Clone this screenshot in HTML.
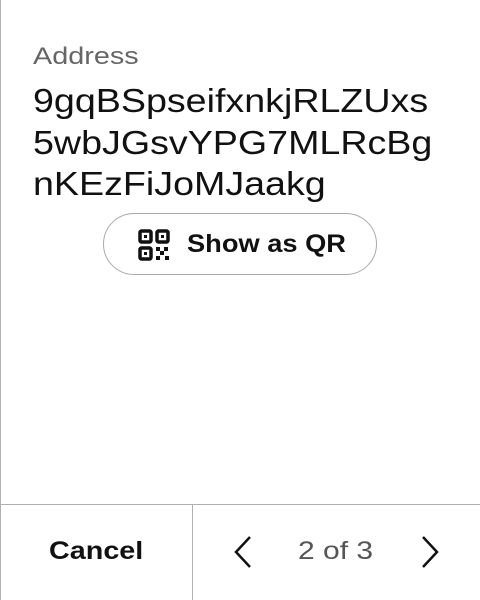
<!DOCTYPE html>
<html><head><style>
*{margin:0;padding:0;box-sizing:border-box}
body{width:480px;height:600px;background:#fff;font-family:"Liberation Sans",sans-serif;position:relative;overflow:hidden}
.s{transform-origin:0 0;white-space:nowrap}
.lb{position:absolute;left:0;top:0;width:1px;height:600px;background:#b0b0b0}
.lbl{position:absolute;left:33px;top:43px;font-size:24px;color:#666;transform:scaleX(1.2)}
.addr{position:absolute;left:33px;top:80px;font-size:33px;line-height:41.5px;color:#111;transform:scaleX(1.14)}
.btn{position:absolute;left:103px;top:213px;width:274px;height:62px;border:1.5px solid #aaa;border-radius:31px}
.btn span{position:absolute;left:83px;top:16px;font-size:25px;font-weight:bold;color:#111;transform:scaleX(1.09)}
.btn svg{position:absolute;left:34px;top:15px}
.hl{position:absolute;left:0;top:504px;width:480px;height:1px;background:#b0b0b0}
.vl{position:absolute;left:192px;top:504px;width:1px;height:96px;background:#b0b0b0}
.cancel{position:absolute;left:49px;top:537px;font-size:25px;font-weight:bold;color:#111;transform:scaleX(1.15)}
.pg{position:absolute;left:298px;top:537px;font-size:25px;color:#555;transform:scaleX(1.2)}
</style></head><body>
<div class="lb"></div>
<div class="lbl s">Address</div>
<div class="addr s">9gqBSpseifxnkjRLZUxs<br>5wbJGsvYPG7MLRcBg<br>nKEzFiJoMJaakg</div>
<div class="btn"><svg width="32" height="32" viewBox="0 0 32 32" fill="none" stroke="#111" stroke-width="3.5">
<rect x="2" y="2" width="11" height="11" rx="1.5"/><rect x="19" y="2" width="11" height="11" rx="1.5"/><rect x="2" y="19" width="11" height="11" rx="1.5"/>
<g fill="#111" stroke="none"><rect x="6" y="6" width="3" height="3"/><rect x="23" y="6" width="3" height="3"/><rect x="6" y="23" width="3" height="3"/>
<rect x="18" y="18" width="4" height="4"/><rect x="26" y="18" width="4" height="4"/><rect x="22" y="22" width="4" height="4"/><rect x="18" y="27" width="4" height="4"/><rect x="27" y="27" width="4" height="4"/></g>
</svg><span class="s">Show as QR</span></div>
<div class="hl"></div><div class="vl"></div>
<div class="cancel s">Cancel</div>
<svg style="position:absolute;left:232px;top:535px" width="22" height="34" viewBox="0 0 22 34"><path d="M18 2 L4 17 L18 32" fill="none" stroke="#111" stroke-width="2.5"/></svg>
<div class="pg s">2 of 3</div>
<svg style="position:absolute;left:419px;top:535px" width="22" height="34" viewBox="0 0 22 34"><path d="M4 2 L18 17 L4 32" fill="none" stroke="#111" stroke-width="2.5"/></svg>
</body></html>
